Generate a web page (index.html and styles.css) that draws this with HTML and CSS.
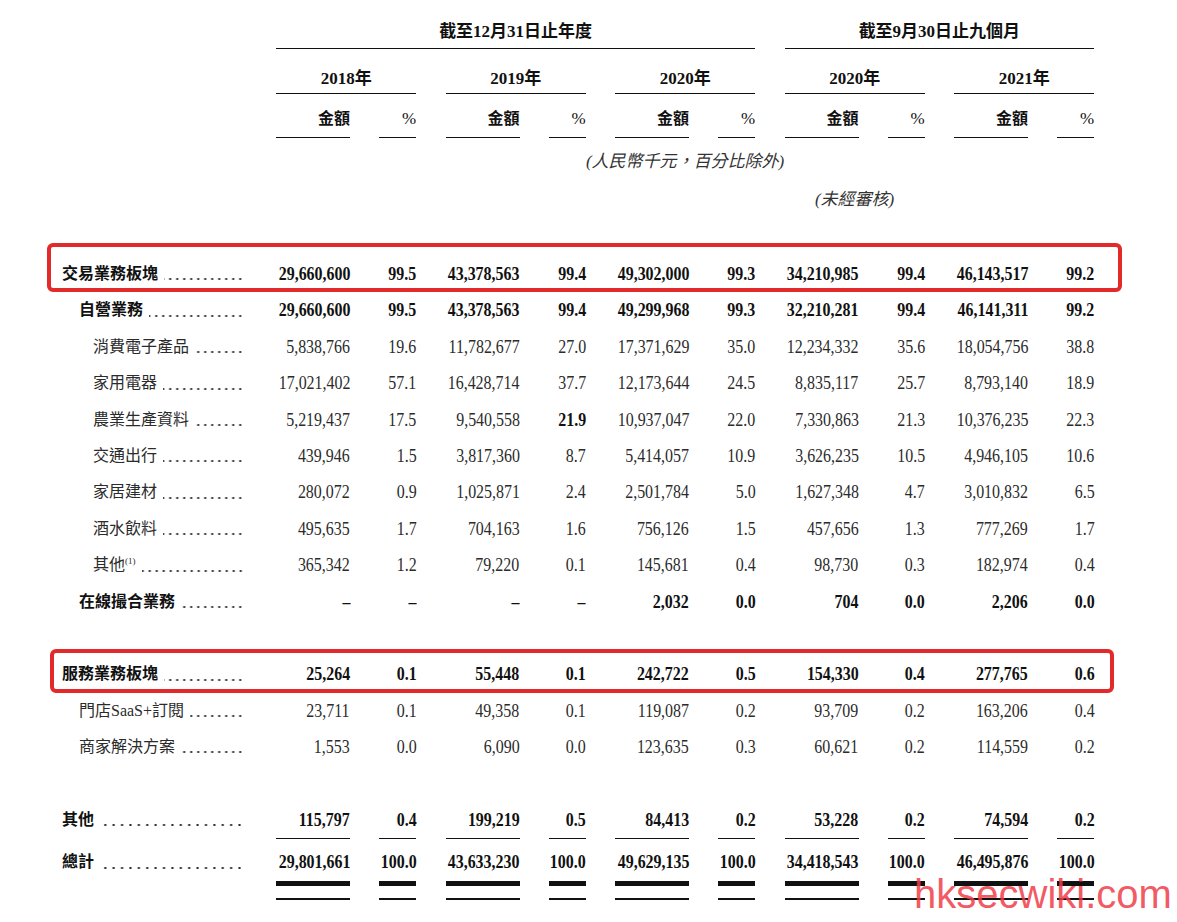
FILE: index.html
```html
<!DOCTYPE html>
<html lang="zh-Hant">
<head>
<meta charset="utf-8">
<title>收入明細</title>
<link rel="stylesheet" href="styles.css">
</head>
<body>
<div class="page">
  <div class="row rowA">
    <div class="hcell span-year">截至12月31日止年度</div>
    <div class="hcell span-nine">截至9月30日止九個月</div>
  </div>
  <div class="row rowB">
    <div class="hcell y1">2018年</div>
    <div class="hcell y2">2019年</div>
    <div class="hcell y3">2020年</div>
    <div class="hcell y4">2020年</div>
    <div class="hcell y5">2021年</div>
  </div>
  <div class="row rowC">
    <div class="hcell c2">金額</div><div class="hcell pc">%</div>
    <div class="hcell">金額</div><div class="hcell pc">%</div>
    <div class="hcell">金額</div><div class="hcell pc">%</div>
    <div class="hcell">金額</div><div class="hcell pc">%</div>
    <div class="hcell">金額</div><div class="hcell pc">%</div>
  </div>
  <div class="row rowD">
    <div class="note note-all">(人民幣千元，百分比除外)</div>
  </div>
  <div class="row rowE">
    <div class="note note-nine">(未經審核)</div>
  </div>

  <div class="body">
    <div class="row drow b boxed box1">
      <div class="lab"><span class="t">交易業務板塊</span><span class="d"></span></div>
      <div class="num"><span>29,660,600</span></div><div class="num"><span>99.5</span></div>
      <div class="num"><span>43,378,563</span></div><div class="num"><span>99.4</span></div>
      <div class="num"><span>49,302,000</span></div><div class="num"><span>99.3</span></div>
      <div class="num"><span>34,210,985</span></div><div class="num"><span>99.4</span></div>
      <div class="num"><span>46,143,517</span></div><div class="num"><span>99.2</span></div>
    </div>
    <div class="row drow b l1">
      <div class="lab"><span class="t">自營業務</span><span class="d"></span></div>
      <div class="num"><span>29,660,600</span></div><div class="num"><span>99.5</span></div>
      <div class="num"><span>43,378,563</span></div><div class="num"><span>99.4</span></div>
      <div class="num"><span>49,299,968</span></div><div class="num"><span>99.3</span></div>
      <div class="num"><span>32,210,281</span></div><div class="num"><span>99.4</span></div>
      <div class="num"><span>46,141,311</span></div><div class="num"><span>99.2</span></div>
    </div>
    <div class="row drow l2">
      <div class="lab"><span class="t">消費電子產品</span><span class="d"></span></div>
      <div class="num"><span>5,838,766</span></div><div class="num"><span>19.6</span></div>
      <div class="num"><span>11,782,677</span></div><div class="num"><span>27.0</span></div>
      <div class="num"><span>17,371,629</span></div><div class="num"><span>35.0</span></div>
      <div class="num"><span>12,234,332</span></div><div class="num"><span>35.6</span></div>
      <div class="num"><span>18,054,756</span></div><div class="num"><span>38.8</span></div>
    </div>
    <div class="row drow l2">
      <div class="lab"><span class="t">家用電器</span><span class="d"></span></div>
      <div class="num"><span>17,021,402</span></div><div class="num"><span>57.1</span></div>
      <div class="num"><span>16,428,714</span></div><div class="num"><span>37.7</span></div>
      <div class="num"><span>12,173,644</span></div><div class="num"><span>24.5</span></div>
      <div class="num"><span>8,835,117</span></div><div class="num"><span>25.7</span></div>
      <div class="num"><span>8,793,140</span></div><div class="num"><span>18.9</span></div>
    </div>
    <div class="row drow l2">
      <div class="lab"><span class="t">農業生產資料</span><span class="d"></span></div>
      <div class="num"><span>5,219,437</span></div><div class="num"><span>17.5</span></div>
      <div class="num"><span>9,540,558</span></div><div class="num strong"><span>21.9</span></div>
      <div class="num"><span>10,937,047</span></div><div class="num"><span>22.0</span></div>
      <div class="num"><span>7,330,863</span></div><div class="num"><span>21.3</span></div>
      <div class="num"><span>10,376,235</span></div><div class="num"><span>22.3</span></div>
    </div>
    <div class="row drow l2">
      <div class="lab"><span class="t">交通出行</span><span class="d"></span></div>
      <div class="num"><span>439,946</span></div><div class="num"><span>1.5</span></div>
      <div class="num"><span>3,817,360</span></div><div class="num"><span>8.7</span></div>
      <div class="num"><span>5,414,057</span></div><div class="num"><span>10.9</span></div>
      <div class="num"><span>3,626,235</span></div><div class="num"><span>10.5</span></div>
      <div class="num"><span>4,946,105</span></div><div class="num"><span>10.6</span></div>
    </div>
    <div class="row drow l2">
      <div class="lab"><span class="t">家居建材</span><span class="d"></span></div>
      <div class="num"><span>280,072</span></div><div class="num"><span>0.9</span></div>
      <div class="num"><span>1,025,871</span></div><div class="num"><span>2.4</span></div>
      <div class="num"><span>2,501,784</span></div><div class="num"><span>5.0</span></div>
      <div class="num"><span>1,627,348</span></div><div class="num"><span>4.7</span></div>
      <div class="num"><span>3,010,832</span></div><div class="num"><span>6.5</span></div>
    </div>
    <div class="row drow l2">
      <div class="lab"><span class="t">酒水飲料</span><span class="d"></span></div>
      <div class="num"><span>495,635</span></div><div class="num"><span>1.7</span></div>
      <div class="num"><span>704,163</span></div><div class="num"><span>1.6</span></div>
      <div class="num"><span>756,126</span></div><div class="num"><span>1.5</span></div>
      <div class="num"><span>457,656</span></div><div class="num"><span>1.3</span></div>
      <div class="num"><span>777,269</span></div><div class="num"><span>1.7</span></div>
    </div>
    <div class="row drow l2">
      <div class="lab"><span class="t">其他<sup class="fn">(1)</sup></span><span class="d"></span></div>
      <div class="num"><span>365,342</span></div><div class="num"><span>1.2</span></div>
      <div class="num"><span>79,220</span></div><div class="num"><span>0.1</span></div>
      <div class="num"><span>145,681</span></div><div class="num"><span>0.4</span></div>
      <div class="num"><span>98,730</span></div><div class="num"><span>0.3</span></div>
      <div class="num"><span>182,974</span></div><div class="num"><span>0.4</span></div>
    </div>
    <div class="row drow b l1">
      <div class="lab"><span class="t">在線撮合業務</span><span class="d"></span></div>
      <div class="num"><span>–</span></div><div class="num"><span>–</span></div>
      <div class="num"><span>–</span></div><div class="num"><span>–</span></div>
      <div class="num"><span>2,032</span></div><div class="num"><span>0.0</span></div>
      <div class="num"><span>704</span></div><div class="num"><span>0.0</span></div>
      <div class="num"><span>2,206</span></div><div class="num"><span>0.0</span></div>
    </div>
    <div class="blank"></div>
    <div class="row drow b boxed box2">
      <div class="lab"><span class="t">服務業務板塊</span><span class="d"></span></div>
      <div class="num"><span>25,264</span></div><div class="num"><span>0.1</span></div>
      <div class="num"><span>55,448</span></div><div class="num"><span>0.1</span></div>
      <div class="num"><span>242,722</span></div><div class="num"><span>0.5</span></div>
      <div class="num"><span>154,330</span></div><div class="num"><span>0.4</span></div>
      <div class="num"><span>277,765</span></div><div class="num"><span>0.6</span></div>
    </div>
    <div class="row drow l1">
      <div class="lab"><span class="t">門店SaaS+訂閱</span><span class="d"></span></div>
      <div class="num"><span>23,711</span></div><div class="num"><span>0.1</span></div>
      <div class="num"><span>49,358</span></div><div class="num"><span>0.1</span></div>
      <div class="num"><span>119,087</span></div><div class="num"><span>0.2</span></div>
      <div class="num"><span>93,709</span></div><div class="num"><span>0.2</span></div>
      <div class="num"><span>163,206</span></div><div class="num"><span>0.4</span></div>
    </div>
    <div class="row drow l1">
      <div class="lab"><span class="t">商家解決方案</span><span class="d"></span></div>
      <div class="num"><span>1,553</span></div><div class="num"><span>0.0</span></div>
      <div class="num"><span>6,090</span></div><div class="num"><span>0.0</span></div>
      <div class="num"><span>123,635</span></div><div class="num"><span>0.3</span></div>
      <div class="num"><span>60,621</span></div><div class="num"><span>0.2</span></div>
      <div class="num"><span>114,559</span></div><div class="num"><span>0.2</span></div>
    </div>
    <div class="blank"></div>
    <div class="row drow b ul">
      <div class="lab wide"><span class="t">其他</span><span class="d"></span></div>
      <div class="num"><span>115,797</span></div><div class="num"><span>0.4</span></div>
      <div class="num"><span>199,219</span></div><div class="num"><span>0.5</span></div>
      <div class="num"><span>84,413</span></div><div class="num"><span>0.2</span></div>
      <div class="num"><span>53,228</span></div><div class="num"><span>0.2</span></div>
      <div class="num"><span>74,594</span></div><div class="num"><span>0.2</span></div>
    </div>
    <div class="row drow b tot">
      <div class="lab wide"><span class="t">總計</span><span class="d"></span></div>
      <div class="num"><span>29,801,661</span></div><div class="num"><span>100.0</span></div>
      <div class="num"><span>43,633,230</span></div><div class="num"><span>100.0</span></div>
      <div class="num"><span>49,629,135</span></div><div class="num"><span>100.0</span></div>
      <div class="num"><span>34,418,543</span></div><div class="num"><span>100.0</span></div>
      <div class="num"><span>46,495,876</span></div><div class="num"><span>100.0</span></div>
    </div>
  </div>

  <div class="watermark">hksecwiki.com</div>
</div>
</body>
</html>
```

FILE: styles.css
```css
* { box-sizing: border-box; }

body {
  margin: 0;
  background: #fff;
  color: #111;
  font-family: "Liberation Serif", "Noto Sans CJK TC", serif;
}

.page {
  position: relative;
  width: 1177px;
  height: 922px;
  padding: 15px 0 0 62px;
  overflow: hidden;
}

.row {
  display: grid;
  width: 1032.25px;
  grid-template-columns: 184.75px repeat(5, 74px 37px);
  column-gap: 29.25px;
}

/* ---------- header ---------- */
.hcell {
  font-size: 16px;
  font-weight: 700;
  text-align: center;
  border-bottom: 1.3px solid #111;
  white-space: nowrap;
}

.rowA .hcell { padding-top: 1px; line-height: 32px; font-size: 17px; }
.span-year { grid-column: 2 / 8; }
.span-nine { grid-column: 8 / 12; }

.rowB .hcell {
  padding: 19px 0 3px;
  line-height: 22px;
  font-size: 17px;
}
.y1 { grid-column: 2 / 4; }
.y2 { grid-column: 4 / 6; }
.y3 { grid-column: 6 / 8; }
.y4 { grid-column: 8 / 10; }
.y5 { grid-column: 10 / 12; }

.rowC .hcell {
  padding: 14px 0 7px;
  line-height: 22px;
  text-align: right;
}
.rowC .c2 { grid-column: 2; }
.rowC .pc { font-weight: 400; font-size: 17px; }

.note {
  font-size: 17px;
  font-style: italic;
  color: #333;
  text-align: center;
  line-height: 22px;
  white-space: nowrap;
}
.rowD .note { padding-top: 13px; }
.note-all { grid-column: 2 / 12; }
.rowE .note { padding-top: 16px; }
.note-nine { grid-column: 8 / 10; }

/* ---------- body ---------- */
.body { margin-top: 45px; }

.drow {
  height: 36.4px;
  line-height: 36.4px;
}

.blank { height: 36.4px; }

.lab {
  display: flex;
  font-size: 16px;
  color: #2b2b2b;
  white-space: nowrap;
  padding-right: 3px;
}
.lab .d {
  flex: 1;
  margin-left: 6px;
  height: 36.4px;
  background-image: radial-gradient(circle, #2b2b2b 0.9px, transparent 1.3px);
  background-size: 7px 4px;
  background-repeat: repeat-x;
  background-position: right 0 bottom 11px;
}
.lab.wide .d { margin-left: 8px; background-size: 8.4px 4px; }

.l1 .lab { padding-left: 17px; }
.l2 .lab { padding-left: 31px; }

.fn {
  font-size: 9px;
  vertical-align: 6px;
  line-height: 0;
}

.num {
  display: flex;
  flex-direction: column;
  align-items: flex-end;
  font-size: 19px;
  color: #2b2b2b;
  white-space: nowrap;
}
.num span {
  display: block;
  line-height: 36.4px;
  transform: scaleX(0.84);
  transform-origin: 100% 50%;
}

.b .lab, .b .num, .num.strong {
  font-weight: 700;
  color: #111;
}

.ul .num { border-bottom: 1.5px solid #111; }

.tot { height: auto; margin-top: 6px; }
.tot .num::after {
  content: "";
  display: block;
  align-self: stretch;
  height: 12px;
  border-top: 5px solid #111;
  border-bottom: 2px solid #111;
}

/* annotation boxes */
.boxed { position: relative; }
.boxed::after {
  content: "";
  position: absolute;
  border: 4px solid #e22a2a;
  border-radius: 6px;
  pointer-events: none;
}
.box1::after { left: -15px; right: -28px; top: -13px; bottom: 0; }
.box2::after { left: -12px; right: -20px; top: -7px; bottom: 0; }

.watermark {
  position: absolute;
  left: 914px;
  top: 874px;
  font-family: "Liberation Sans", Arial, sans-serif;
  font-size: 40px;
  line-height: 40px;
  color: rgba(240, 60, 72, 0.85);
  white-space: nowrap;
}
```
